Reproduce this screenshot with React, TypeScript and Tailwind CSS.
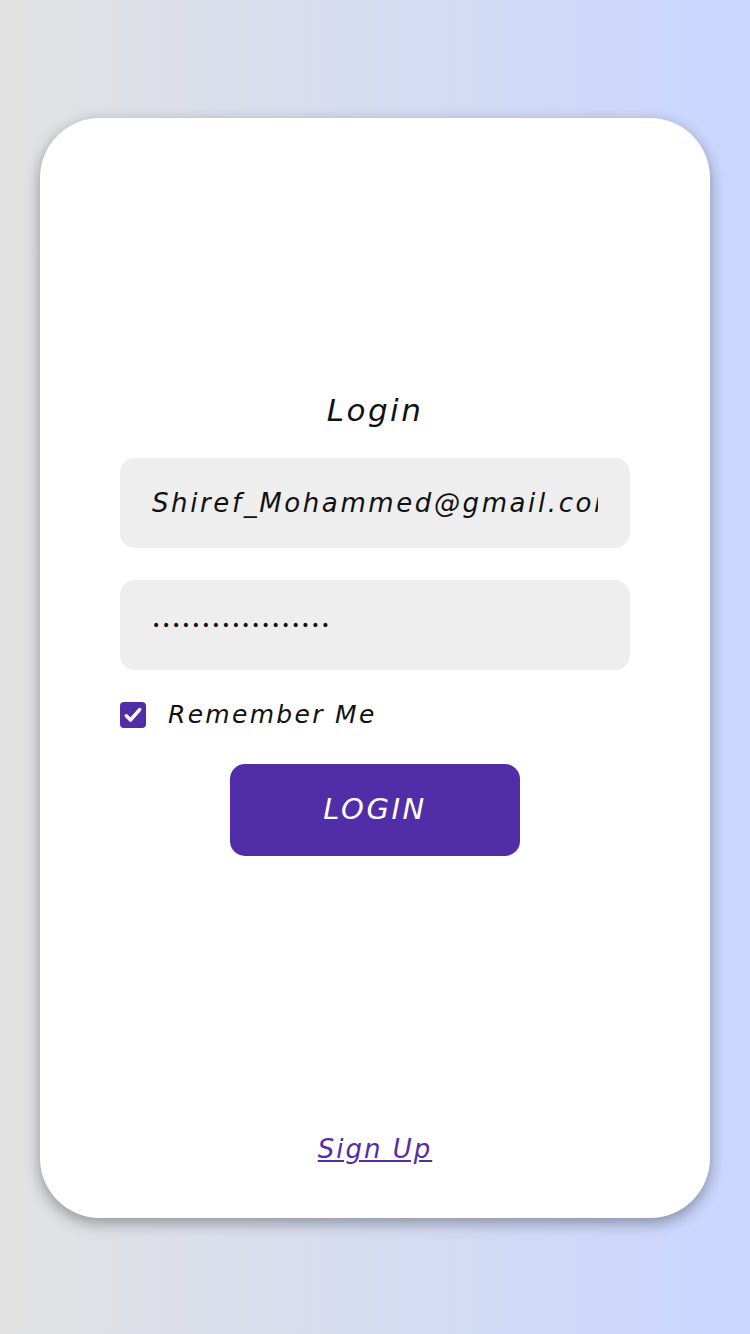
import React from 'react';

const font = { fontFamily: '"DejaVu Sans", "Noto Sans", sans-serif' };

export default function App() {
  return (
    <div
      className="w-[750px] h-[1334px] bg-gradient-to-r from-[#e2e2e2] to-[#c9d6ff] flex justify-center"
      style={font}
    >
      <div className="mt-[118px] w-[670px] h-[1100px] rounded-[60px] bg-white shadow-[0_5px_15px_rgba(0,0,0,0.35)] flex flex-col items-center px-[80px]">
        <h1 className="mt-[270px] text-[31px] leading-[44px] italic tracking-[2.5px] text-[#111]">Login</h1>
        <input
          readOnly
          value="Shiref_Mohammed@gmail.com"
          className="mt-[26px] w-full h-[90px] rounded-[15px] bg-[#eeeeee] px-[32px] text-[26px] italic tracking-[2.6px] text-[#111] outline-none"
          style={font}
        />
        <input
          readOnly
          type="password"
          value="123456789012345678"
          className="mt-[32px] w-full h-[90px] rounded-[15px] bg-[#eeeeee] px-[32px] text-[14px] tracking-[1.7px] text-[#111] outline-none"
          style={font}
        />
        <label className="mt-[32px] self-start flex items-center gap-[22px]">
          <span className="w-[26px] h-[26px] rounded-[4px] bg-[#512da8] flex items-center justify-center">
            <svg width="20" height="20" viewBox="0 0 24 24" fill="none" stroke="white" strokeWidth="4.2" strokeLinecap="round" strokeLinejoin="round">
              <path d="M4 13l5 5L20 5.5" />
            </svg>
          </span>
          <span className="text-[25px] leading-[26px] italic tracking-[2.3px] text-[#111]">Remember Me</span>
        </label>
        <button className="mt-[36px] w-[290px] h-[92px] rounded-[15px] bg-[#512da8] text-white text-[29px] italic tracking-[2.5px]">
          LOGIN
        </button>
        <a className="mt-auto mb-[51px] text-[26px] leading-[36px] italic tracking-[2px] text-[#512da8] underline">
          Sign Up
        </a>
      </div>
    </div>
  );
}
